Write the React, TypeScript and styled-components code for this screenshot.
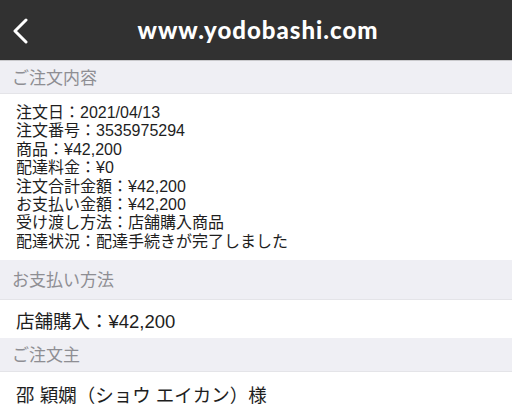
import * as React from "react";
import styled, { createGlobalStyle } from "styled-components";

const GlobalStyle = createGlobalStyle`
  html, body {
    margin: 0;
    padding: 0;
    background: #ffffff;
  }
  body {
    font-family: "Liberation Sans", "Noto Sans CJK JP", sans-serif;
    -webkit-font-smoothing: antialiased;
  }
`;

const Page = styled.main`
  width: 512px;
  height: 413px;
  overflow: hidden;
  background: #ffffff;
`;

const NavBar = styled.header`
  position: relative;
  height: 60px;
  background: #313131;
  border-bottom: 1px solid #c9c9cc;
  display: flex;
  align-items: center;
  justify-content: center;
`;

const BackButton = styled.button`
  position: absolute;
  left: 9px;
  top: 15px;
  width: 22px;
  height: 32px;
  padding: 0;
  border: none;
  background: transparent;
  display: flex;
  align-items: center;
  justify-content: center;
`;

const SiteTitle = styled.h1`
  margin: 0 0 2px 4px;
  font-family: Lato, "Noto Sans", sans-serif;
  font-weight: 900;
  font-size: 24px;
  letter-spacing: 1px;
  color: #ffffff;
`;

const SectionHeader = styled.div<{ $height: number }>`
  height: ${(p) => p.$height}px;
  box-sizing: border-box;
  padding: 0 12px 2px;
  display: flex;
  align-items: center;
  background: #efeff4;
  color: #8e8e93;
  font-size: 17px;
  border-bottom: 1px solid #e4e4e8;
`;

const DetailList = styled.div`
  padding: 10px 16px 9px;
  font-size: 16px;
  line-height: 18.4px;
  color: #1e1e1e;
`;

const DetailLine = styled.div`
  white-space: nowrap;
`;

const Row = styled.div<{ $height: number }>`
  height: ${(p) => p.$height}px;
  box-sizing: border-box;
  padding: 2px 16px 0;
  display: flex;
  align-items: center;
  font-size: 18.5px;
  color: #1e1e1e;
  white-space: nowrap;
`;

const details = [
  "注文日：2021/04/13",
  "注文番号：3535975294",
  "商品：¥42,200",
  "配達料金：¥0",
  "注文合計金額：¥42,200",
  "お支払い金額：¥42,200",
  "受け渡し方法：店舗購入商品",
  "配達状況：配達手続きが完了しました",
];

const App = () => {
  return (
    <Page>
      <GlobalStyle />
      <NavBar>
        <BackButton aria-label="戻る">
          <svg width="16" height="26" viewBox="0 0 16 26" fill="none">
            <path
              d="M14 2 L3 13 L14 24"
              stroke="#ffffff"
              strokeWidth="3"
              strokeLinecap="round"
              strokeLinejoin="round"
            />
          </svg>
        </BackButton>
        <SiteTitle>www.yodobashi.com</SiteTitle>
      </NavBar>
      <SectionHeader $height={33}>ご注文内容</SectionHeader>
      <DetailList>
        {details.map((line, index) => (
          <DetailLine key={index}>{line}</DetailLine>
        ))}
      </DetailList>
      <SectionHeader $height={40}>お支払い方法</SectionHeader>
      <Row $height={38}>店舗購入：¥42,200</Row>
      <SectionHeader $height={34}>ご注文主</SectionHeader>
      <Row $height={41}>邵 穎嫻（ショウ エイカン）様</Row>
    </Page>
  );
};

export default App;
